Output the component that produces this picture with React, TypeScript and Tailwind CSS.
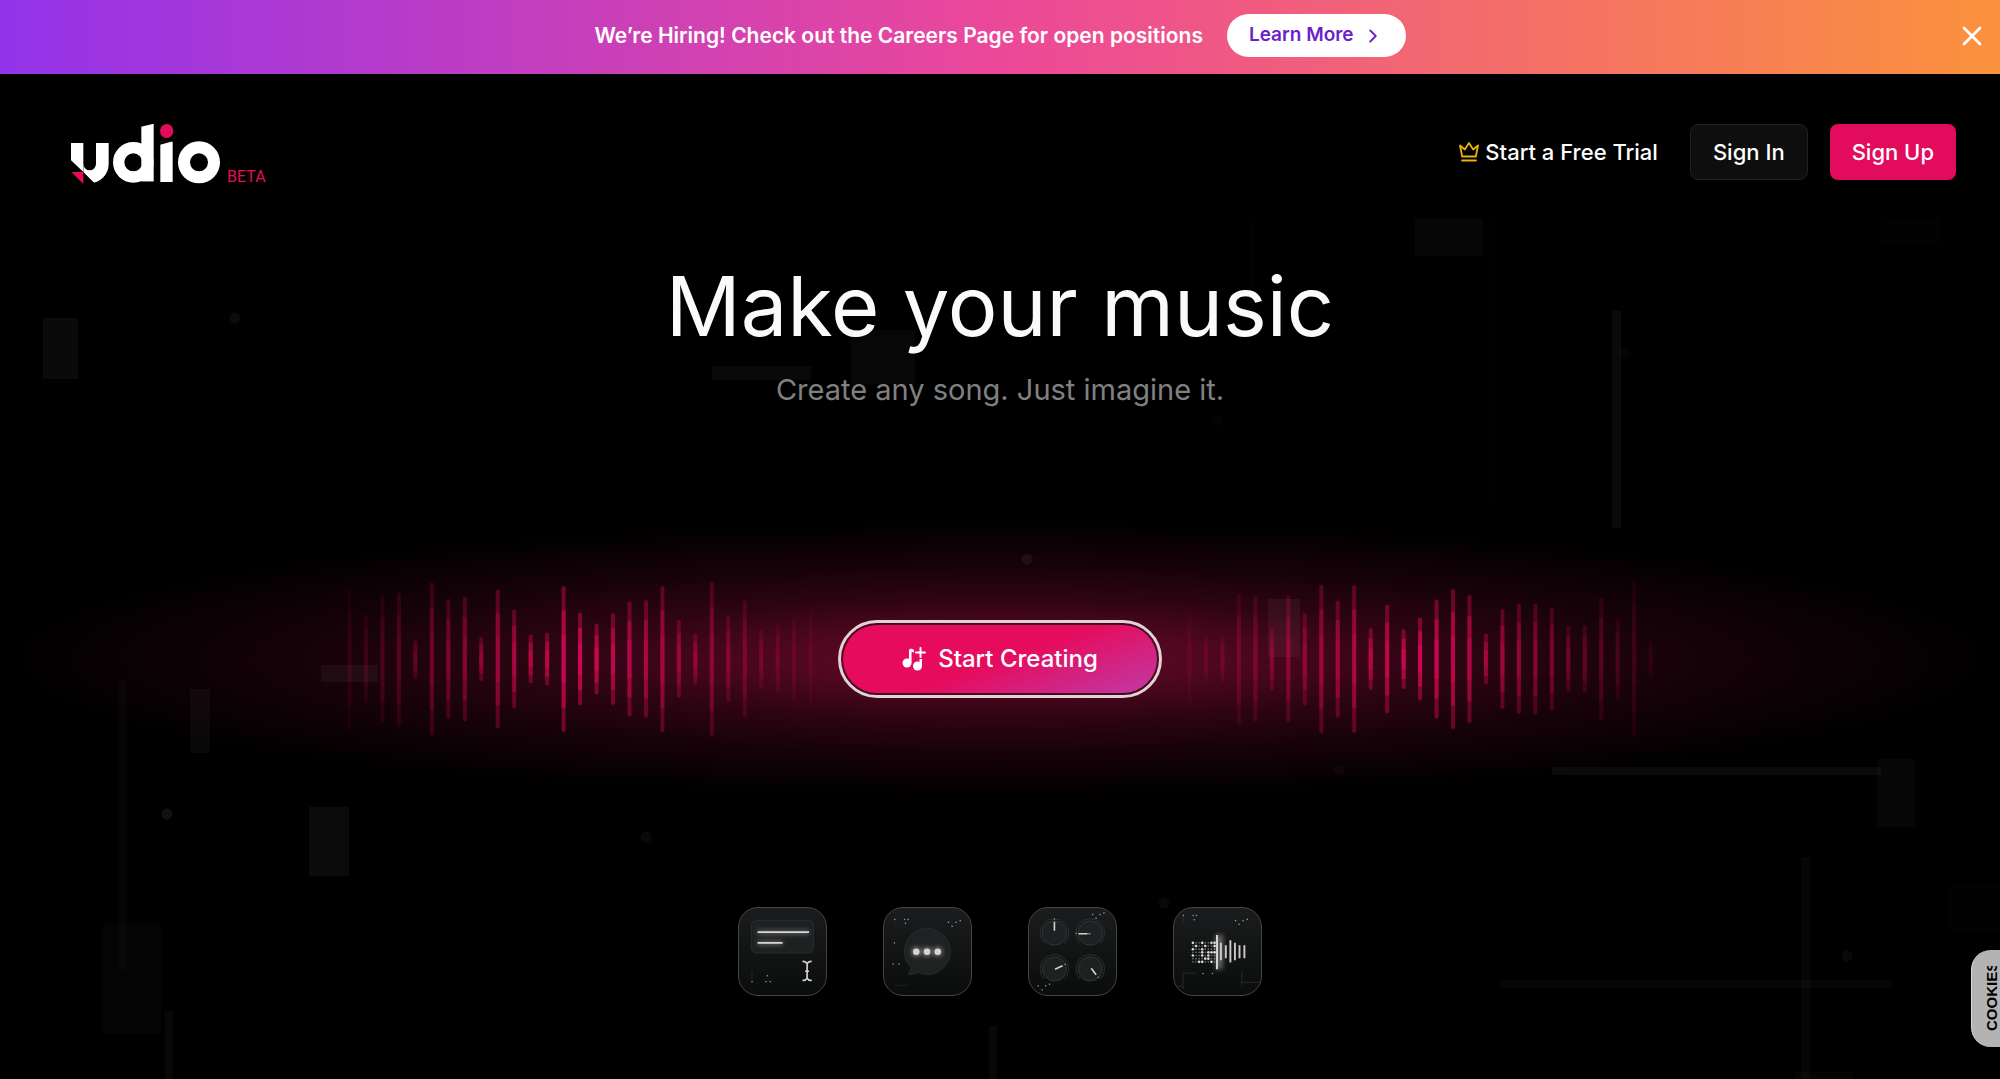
import { ChevronRight, X } from "lucide-react";

const LEFT_WAVE = [
  141, 89, 126, 133, 40, 153, 120, 125, 44, 139, 99, 49, 53, 146, 93, 71, 92, 115, 118, 146, 78, 51, 155, 86, 117, 59,
  68, 81, 97,
];
const RIGHT_WAVE = [
  93, 46, 46, 130, 125, 62, 126, 93, 148, 117, 148, 62, 109, 60, 83, 119, 140, 128, 51, 100, 110, 111, 103, 66, 68,
  123, 81, 156, 37,
];

// x, y, width, height, white opacity
const BLOCKS = [
  [43, 318, 35, 61, 0.038],
  [712, 366, 99, 14, 0.036],
  [851, 330, 64, 54, 0.026],
  [309, 807, 40, 69, 0.045],
  [190, 689, 20, 64, 0.03],
  [119, 681, 7, 290, 0.018],
  [103, 923, 58, 111, 0.015],
  [165, 1011, 8, 80, 0.03],
  [321, 665, 57, 17, 0.045],
  [989, 1026, 8, 80, 0.03],
  [1249, 218, 6, 80, 0.008],
  [1488, 218, 6, 290, 0.005],
  [1415, 218, 68, 38, 0.024],
  [1881, 218, 58, 27, 0.006],
  [1612, 311, 9, 217, 0.04],
  [1268, 599, 32, 58, 0.05],
  [1552, 767, 329, 8, 0.04],
  [1877, 759, 38, 68, 0.022],
  [1801, 857, 9, 240, 0.022],
  [1501, 980, 392, 8, 0.022],
  [1950, 885, 60, 46, 0.008],
  [1795, 1072, 58, 30, 0.02],
];

// cx, cy, white opacity
const DOTS = [
  [235, 318, 0.045],
  [167, 814, 0.065],
  [646, 837, 0.04],
  [1624, 353, 0.018],
  [1217, 421, 0.01],
  [1027, 559, 0.055],
  [1339, 770, 0.022],
  [1164, 903, 0.03],
  [1847, 956, 0.035],
];

const DITHER = [
  "o..o..oo",
  ".o..o..o",
  "o..o....",
  "...o.oOO",
  "o..O.o..",
  "....OO..",
  "..OO..o.",
];

function Backdrop() {
  return (
    <svg
      className="absolute inset-0 h-full w-full"
      viewBox="0 0 2000 1079"
      preserveAspectRatio="xMidYMid slice"
      fill="white"
      aria-hidden="true"
    >
      {BLOCKS.map(([x, y, w, h, o]) => (
        <rect key={`${x}-${y}`} x={x} y={y} width={w} height={h} opacity={o} />
      ))}
      {DOTS.map(([x, y, o]) => (
        <circle key={`${x}-${y}`} cx={x} cy={y} r="5.5" opacity={o} />
      ))}
    </svg>
  );
}

function Banner() {
  return (
    <div className="relative flex h-[74px] items-center justify-center bg-[linear-gradient(to_right,#9333ea,#ec4899_50%,#fb923c)] pb-[3px]">
      <p className="text-[21px] font-semibold text-white">We’re Hiring! Check out the Careers Page for open positions</p>
      <a
        href="#careers"
        className="ml-6 flex h-[43px] items-center gap-2 rounded-full bg-white px-[22px] text-[19px] font-semibold text-[#6d1fc9]"
      >
        Learn More
        <ChevronRight className="size-[22px]" strokeWidth={2} />
      </a>
      <button type="button" aria-label="Close" className="absolute right-3 text-white">
        <X className="size-8" strokeWidth={2} />
      </button>
    </div>
  );
}

function Logo() {
  return (
    <a href="#home" className="flex items-end gap-[6px]">
      <svg className="h-[60px] w-[150px]" viewBox="93 72 450 180" role="img" aria-label="udio">
        <clipPath id="bowl">
          <polygon points="130,192 210,192 210,255 169,255 130,216" />
        </clipPath>
        <g fill="white">
          <rect x="93" y="129" width="37" height="88" />
          <rect x="168" y="129" width="38" height="64" />
          <rect x="304" y="72" width="37" height="173" />
          <rect x="361" y="125" width="37" height="121" />
        </g>
        <g fill="none" stroke="white">
          <circle cx="149" cy="192" r="38" strokeWidth="38" clipPath="url(#bowl)" />
          <circle cx="280" cy="187" r="44" strokeWidth="34" />
          <circle cx="477" cy="187" r="45" strokeWidth="36" />
        </g>
        <g fill="black">
          <polygon points="92,180 131,217 131,219 92,219" />
          <polygon points="303,71 342,71 303,80" />
          <polygon points="360,124 399,124 360,134" />
          <rect x="303" y="245" width="40" height="6" />
        </g>
        <polygon points="94,216 130,216 130,252" fill="#e30b5d" />
        <ellipse cx="380" cy="93" rx="20" ry="21" fill="#e30b5d" />
      </svg>
      <span className="font-[Roboto] text-base leading-[14px] font-normal text-[#e30b5d]">BETA</span>
    </a>
  );
}

function Header() {
  return (
    <header className="relative flex items-start justify-between pt-[50px] pr-11 pl-[71px] text-[22px] font-medium text-white">
      <Logo />
      <nav className="flex items-center">
        <a href="#trial" className="flex items-center gap-[6px]">
          <svg
            className="size-5"
            viewBox="0 0 20 20"
            fill="none"
            stroke="#e8b10c"
            strokeWidth="1.8"
            strokeLinejoin="round"
            strokeLinecap="round"
            aria-hidden="true"
          >
            <path d="M1 3.500 3.200 14.500h13.600L19 3.500l-4.800 4L10 1 5.800 7.500z" />
            <path d="M3 18.500h14" />
          </svg>
          Start a Free Trial
        </a>
        <button type="button" className="ml-8 h-14 rounded-lg border border-[#1f1f1f] bg-[#0e0e0e] px-[22px]">
          Sign In
        </button>
        <button type="button" className="ml-[22px] h-14 rounded-lg bg-[#e30b5d] px-[22px]">
          Sign Up
        </button>
      </nav>
    </header>
  );
}

function Waveform({ bars }: { bars: number[] }) {
  return (
    <svg
      className="h-40 w-[466px] [mask-image:linear-gradient(to_right,rgba(0,0,0,0.12),black_50%,rgba(0,0,0,0.12))]"
      viewBox="0 0 466 160"
      fill="#e8085c"
      aria-hidden="true"
    >
      {bars.map((h, i) => {
        const x = 0.5 + i * 16.47;
        return (
          <g key={i}>
            <rect x={x} y={80 - h / 2} width="4" height={h} rx="2" opacity="0.45" />
            <rect x={x} y={80 - h / 3} width="4" height={(h * 2) / 3} opacity="0.5" />
            <rect x={x} y={80 - h / 6} width="4" height={h / 3} opacity="0.55" />
          </g>
        );
      })}
    </svg>
  );
}

function StartButton() {
  return (
    <button type="button" className="h-[78px] w-[324px] shrink-0 rounded-full border-3 border-[#e2d2d8] p-[2px]">
      <span className="flex h-full items-center justify-center gap-3 rounded-full bg-[linear-gradient(160deg,#e60b5d_50%,#c03aa6)] text-2xl font-medium text-white">
        <svg className="size-6" viewBox="0 0 24 24" fill="white" aria-hidden="true">
          <circle cx="5" cy="16" r="4.5" />
          <circle cx="15.5" cy="19" r="4.5" />
          <path d="M7 16V3.5c0-2 3-2.500 5-.5v2.500c-1-.8-2.500-.8-2.500.5v10zM17.500 19v-7h2.500v7z" />
          <path d="M18.500 1v9M14 5.500h9" stroke="white" strokeWidth="2" fill="none" strokeLinecap="round" />
        </svg>
        Start Creating
      </span>
    </button>
  );
}

function Sparks({ points }: { points: number[][] }) {
  return (
    <g fill="#9a9a9a">
      {points.map(([x, y]) => (
        <rect key={`${x}-${y}`} x={x - 2} y={y - 2} width="4" height="4" />
      ))}
    </g>
  );
}

function LyricsArt() {
  return (
    <>
      <rect x="38" y="38" width="191" height="100" rx="16" fill="#1f2021" stroke="#2c2d2e" strokeWidth="3" />
      <g fill="#ffffff" filter="url(#glow)" opacity="0.4">
        <rect x="57" y="70" width="158" height="9" />
        <rect x="57" y="103" width="77" height="9" />
      </g>
      <path d="M57 74h158M57 107h77" stroke="#d8d8d8" strokeWidth="6" />
      <path
        d="M195 164q10-1 14 7q4-8 14-7M195 222q10 1 14-7q4 8 14 7M209 171v44M203 194h12"
        fill="none"
        stroke="#d8d8d8"
        strokeWidth="5"
      />
      <path d="M40 194v28" stroke="#303030" strokeWidth="2" />
      <Sparks points={[[40, 226], [87, 208], [83, 226], [96, 226]]} />
    </>
  );
}

function ChatArt() {
  return (
    <>
      <path
        d="M132 62a71 71 0 1 1-28 136q-12 8-26 6q-5-3-1-7q6-6 6-14A71 71 0 0 1 132 62z"
        fill="#202122"
        stroke="#2a2b2c"
        strokeWidth="3"
      />
      <g fill="#ffffff" filter="url(#glow)" opacity="0.5">
        <circle cx="99" cy="134" r="13" />
        <circle cx="132" cy="134" r="13" />
        <circle cx="165" cy="134" r="13" />
      </g>
      <g fill="#d4d4d4">
        <circle cx="99" cy="134" r="10" />
        <circle cx="132" cy="134" r="10" />
        <circle cx="165" cy="134" r="10" />
      </g>
      <path d="M32 38v20M33 237h42" stroke="#2c2c2c" strokeWidth="2" />
      <Sparks
        points={[[33, 35], [63, 35], [74, 35], [66, 47], [32, 107], [28, 172], [46, 172], [198, 44], [209, 56], [221, 44], [234, 39]]}
      />
    </>
  );
}

function KnobsArt() {
  return (
    <>
      {[[78, 77], [188, 77], [78, 187], [188, 187]].map(([x, y]) => (
        <g key={`${x}-${y}`} fill="none">
          <path
            d={`M${x - 31} ${y + 31}A44 44 0 1 1 ${x + 31} ${y + 31}`}
            stroke="#303132"
            strokeWidth="3"
          />
          <circle cx={x} cy={y} r="37" fill="#1f2021" stroke="#353637" strokeWidth="3" />
        </g>
      ))}
      <g stroke="#d0d0d0" strokeWidth="5">
        <path d="M78 42v28" />
        <path d="M152 79h28" />
        <path d="M180 79h10" stroke="#707070" />
        <path d="M80 188l23-11" />
        <path d="M191 185l15 20" />
      </g>
      <Sparks
        points={[[78, 34], [145, 78], [111, 173], [213, 213], [195, 20], [206, 31], [218, 20], [230, 15], [28, 239], [40, 251], [51, 239], [63, 234]]}
      />
    </>
  );
}

function RemixArt() {
  return (
    <>
      {DITHER.map((row, r) =>
        [...row].map((cell, c) => (
          <circle
            key={`${r}-${c}`}
            cx={58 + c * 9.5}
            cy={107 + r * 9.7}
            r={cell === "." ? 2.6 : 4}
            fill={cell === "." ? "#6d6d6d" : "#d8d8d8"}
          />
        ))
      )}
      <rect x="128" y="82" width="22" height="106" fill="#ffffff" opacity="0.35" filter="url(#glow)" />
      <path d="M132 83v105" stroke="#d8d8d8" strokeWidth="6" />
      <path
        d="M144 107v53M159 114v40M173 99v68M187 107v53M201 114v40M216 114v40"
        stroke="#c8c8c8"
        strokeWidth="6"
      />
      <path d="M28 28v18M28 248v-48h42M208 196v46M208 228h56M10 240h18" stroke="#2a2b2c" strokeWidth="3" fill="none" />
      <Sparks points={[[29, 23], [59, 23], [69, 23], [62, 36], [189, 39], [200, 50], [212, 39], [225, 35], [89, 201], [118, 201]]} />
    </>
  );
}

function Tile({ label, children }: { label: string; children: React.ReactNode }) {
  return (
    <li className="size-[89px] overflow-hidden rounded-[20px] border border-[#444546] bg-linear-to-b from-[#1b1c1d] to-[#0b0c0c]">
      <svg className="size-full" viewBox="0 0 267 267" role="img" aria-label={label}>
        <filter id="glow" x="-50%" y="-200%" width="200%" height="500%">
          <feGaussianBlur stdDeviation="8" />
        </filter>
        {children}
      </svg>
    </li>
  );
}

export default function App() {
  return (
    <div className="relative min-h-screen overflow-hidden bg-black font-[Inter,sans-serif]">
      <Backdrop />
      <Banner />
      <Header />
      <main className="relative flex flex-col items-center">
        <h1 className="mt-[72px] text-[83px] leading-[100px] text-[#fafafa]">Make your music</h1>
        <p className="mt-[14px] text-[29px] leading-10 text-[#808080]">Create any song. Just imagine it.</p>

        <section className="relative mt-[169px] flex w-full items-center justify-center">
          <div className="absolute inset-x-0 h-[276px] bg-[radial-gradient(closest-side,rgba(224,20,88,0.43),rgba(224,20,88,0.36)_20%,rgba(224,20,88,0.2)_45%,rgba(224,20,88,0.1)_68%,rgba(224,20,88,0.05)_84%,transparent)]" />
          <div className="relative flex items-center gap-[25px]">
            <Waveform bars={LEFT_WAVE} />
            <StartButton />
            <Waveform bars={RIGHT_WAVE} />
          </div>
        </section>

        <ul className="mt-[168px] flex gap-14 pb-20">
          <Tile label="Write lyrics">
            <LyricsArt />
          </Tile>
          <Tile label="Describe a song">
            <ChatArt />
          </Tile>
          <Tile label="Adjust controls">
            <KnobsArt />
          </Tile>
          <Tile label="Remix audio">
            <RemixArt />
          </Tile>
        </ul>
      </main>

      <button
        type="button"
        className="fixed right-0 bottom-8 flex h-[97px] w-[29px] items-center justify-end rounded-l-[20px] border-l border-[#d8d8d8] bg-[#b3b3b3]"
      >
        <span className="h-[65px] rotate-180 overflow-hidden font-[Liberation_Sans] text-[15px] leading-4 font-bold text-black [writing-mode:vertical-rl]">
          COOKIES
        </span>
      </button>
    </div>
  );
}
